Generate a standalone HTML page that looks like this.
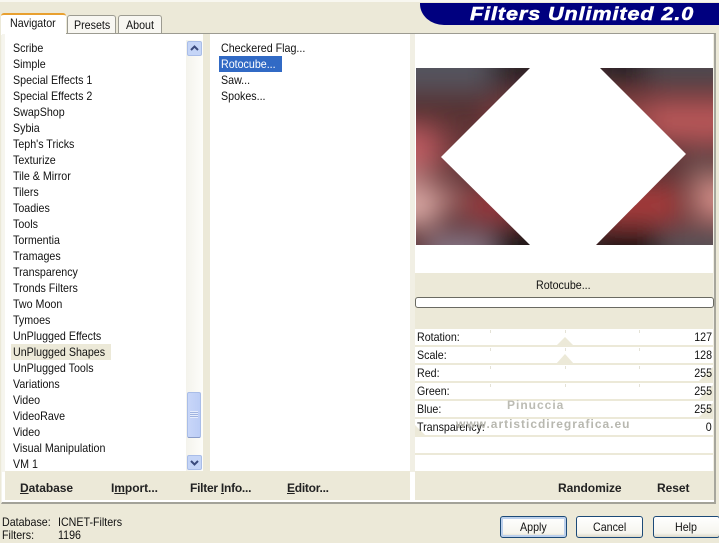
<!DOCTYPE html>
<html>
<head>
<meta charset="utf-8">
<style>
html,body{margin:0;padding:0;}
body{width:719px;height:541px;overflow:hidden;position:relative;background:#ece9d8;font-family:"Liberation Sans",sans-serif;font-size:12px;color:#111;}
.a{position:absolute;white-space:nowrap;}
.t{position:absolute;white-space:nowrap;line-height:16px;height:16px;transform:scaleX(.89);transform-origin:0 0;}
.r{transform-origin:100% 0;}
.b{font-weight:bold;font-size:12px;color:#222;letter-spacing:-.05px;}
u{text-decoration:underline;}
.btn{position:absolute;top:516px;height:22px;box-sizing:border-box;border:1px solid #1c4a78;border-radius:3px;background:linear-gradient(#fff,#f6f5ee 80%,#dcd8c8);}
.tab{position:absolute;top:15px;height:18px;box-sizing:border-box;background:#f8f7f2;border:1px solid #9c9b91;border-bottom:0;border-radius:3px 3px 0 0;}
.row{position:absolute;left:415px;width:298px;height:16px;background:#fff;}
.sep{position:absolute;left:415px;width:298px;height:2px;background:#ece9d8;}
.tick{position:absolute;width:1px;height:3px;background:#e4e2d6;}
</style>
</head>
<body>
<div class="a" style="left:0;top:0;width:719px;height:2px;background:#f8f7f0"></div>

<!-- header logo -->
<div class="a" style="left:420px;top:3px;width:299px;height:22px;background:#00007f;border-bottom-left-radius:24px 21px"></div>
<div class="a" style="left:470px;top:4px;font:italic bold 18px 'Liberation Sans',sans-serif;color:#fff;letter-spacing:.75px;line-height:21px;transform:scaleX(1.2);transform-origin:0 0;-webkit-text-stroke:.5px #fff">Filters Unlimited 2.0</div>

<!-- main panel -->
<div class="a" style="left:1px;top:33px;width:715px;height:471px;box-sizing:border-box;background:#fff;border-top:1px solid #9c9b91;border-right:2px solid #a7a69c;border-bottom:2px solid #a3a298;border-left:1px solid #f4f3ea"></div>

<!-- tabs -->
<div class="tab" style="left:67px;width:49px"></div>
<div class="tab" style="left:118px;width:44px"></div>
<div class="a" style="left:1px;top:13px;width:65px;height:22px;box-sizing:border-box;background:#fff;border-top:2px solid #e8a030;border-radius:3px 3px 0 0"></div>
<div class="t" style="left:10px;top:15px">Navigator</div>
<div class="t" style="left:74px;top:17px">Presets</div>
<div class="t" style="left:126px;top:17px">About</div>

<!-- column separators -->
<div class="a" style="left:2px;top:34px;width:3px;height:438px;background:#f6f5ee"></div>
<div class="a" style="left:203px;top:34px;width:7px;height:438px;background:#ece9d8"></div>
<div class="a" style="left:410px;top:34px;width:5px;height:438px;background:#f1efe4"></div>
<div class="a" style="left:713px;top:34px;width:1px;height:438px;background:#f1efe4"></div>

<!-- scrollbar -->
<div class="a" style="left:186px;top:40px;width:17px;height:431px;background:linear-gradient(90deg,#f4f3ec,#fdfdfa)"></div>
<div class="a" style="left:187px;top:41px;width:15px;height:15px;box-sizing:border-box;background:#c5d5f7;border:1px solid #a9bde8;border-radius:2px"></div>
<svg class="a" style="left:187px;top:41px" width="15" height="15"><path d="M4 9 L7.5 5.5 L11 9" fill="none" stroke="#3a4a7c" stroke-width="2"/></svg>
<div class="a" style="left:187px;top:392px;width:14px;height:46px;box-sizing:border-box;background:linear-gradient(90deg,#c8d6f8,#bccdf6);border:1px solid #a9bde8;border-bottom:1px solid #8a9cc8;border-radius:2px"></div>
<div class="a" style="left:190px;top:411px;width:8px;height:7px;background:repeating-linear-gradient(#e6edfc 0,#e6edfc 1px,#9fb3e0 1px,#9fb3e0 2px)"></div>
<div class="a" style="left:187px;top:455px;width:15px;height:15px;box-sizing:border-box;background:#c5d5f7;border:1px solid #a9bde8;border-radius:2px"></div>
<svg class="a" style="left:187px;top:455px" width="15" height="15"><path d="M4 6 L7.5 9.5 L11 6" fill="none" stroke="#3a4a7c" stroke-width="2"/></svg>

<!-- left list -->
<div class="a" style="left:11px;top:344px;width:100px;height:16px;background:#ece9d8"></div>
<div class="t" style="left:13px;top:40px">Scribe</div>
<div class="t" style="left:13px;top:56px">Simple</div>
<div class="t" style="left:13px;top:72px">Special Effects 1</div>
<div class="t" style="left:13px;top:88px">Special Effects 2</div>
<div class="t" style="left:13px;top:104px">SwapShop</div>
<div class="t" style="left:13px;top:120px">Sybia</div>
<div class="t" style="left:13px;top:136px">Teph's Tricks</div>
<div class="t" style="left:13px;top:152px">Texturize</div>
<div class="t" style="left:13px;top:168px">Tile &amp; Mirror</div>
<div class="t" style="left:13px;top:184px">Tilers</div>
<div class="t" style="left:13px;top:200px">Toadies</div>
<div class="t" style="left:13px;top:216px">Tools</div>
<div class="t" style="left:13px;top:232px">Tormentia</div>
<div class="t" style="left:13px;top:248px">Tramages</div>
<div class="t" style="left:13px;top:264px">Transparency</div>
<div class="t" style="left:13px;top:280px">Tronds Filters</div>
<div class="t" style="left:13px;top:296px">Two Moon</div>
<div class="t" style="left:13px;top:312px">Tymoes</div>
<div class="t" style="left:13px;top:328px">UnPlugged Effects</div>
<div class="t" style="left:13px;top:344px">UnPlugged Shapes</div>
<div class="t" style="left:13px;top:360px">UnPlugged Tools</div>
<div class="t" style="left:13px;top:376px">Variations</div>
<div class="t" style="left:13px;top:392px">Video</div>
<div class="t" style="left:13px;top:408px">VideoRave</div>
<div class="t" style="left:13px;top:424px">Video</div>
<div class="t" style="left:13px;top:440px">Visual Manipulation</div>
<div class="t" style="left:13px;top:456px">VM 1</div>

<!-- middle list -->
<div class="a" style="left:219px;top:56px;width:63px;height:16px;background:#316ac5"></div>
<div class="t" style="left:221px;top:40px">Checkered Flag...</div>
<div class="t" style="left:221px;top:56px;color:#fff">Rotocube...</div>
<div class="t" style="left:221px;top:72px">Saw...</div>
<div class="t" style="left:221px;top:88px">Spokes...</div>

<!-- preview -->
<svg class="a" style="left:416px;top:68px" width="297" height="177" viewBox="0 0 297 177">
<defs>
<filter id="bl" x="-20%" y="-20%" width="140%" height="140%"><feGaussianBlur stdDeviation="13"/></filter>
<clipPath id="cp"><rect width="297" height="177"/></clipPath>
</defs>
<g clip-path="url(#cp)">
<rect width="297" height="177" fill="#5a3335"/>
<g filter="url(#bl)">
<rect x="-30" y="-30" width="110" height="52" fill="#55555f"/>
<rect x="75" y="-30" width="60" height="45" fill="#2a2327"/>
<rect x="-30" y="25" width="130" height="28" fill="#553032"/>
<rect x="70" y="38" width="50" height="28" fill="#85383c"/>
<rect x="-30" y="60" width="50" height="38" fill="#c05c62"/>
<rect x="18" y="62" width="30" height="40" fill="#7a3d40"/>
<rect x="-30" y="100" width="45" height="20" fill="#bb7f7f"/>
<rect x="-30" y="122" width="50" height="36" fill="#dcaaa6"/>
<rect x="20" y="115" width="25" height="30" fill="#a56c6c"/>
<rect x="50" y="125" width="50" height="25" fill="#a5383c"/>
<rect x="10" y="165" width="65" height="40" fill="#857686"/>
<rect x="78" y="160" width="60" height="40" fill="#1c1215"/>
<rect x="180" y="-30" width="55" height="42" fill="#272125"/>
<rect x="232" y="-30" width="90" height="48" fill="#4f4a50"/>
<rect x="180" y="35" width="60" height="22" fill="#a84c4c"/>
<rect x="232" y="32" width="90" height="42" fill="#b85658"/>
<rect x="268" y="80" width="50" height="20" fill="#5f4748"/>
<rect x="270" y="105" width="50" height="12" fill="#a87a74"/>
<rect x="278" y="118" width="50" height="32" fill="#d8908a"/>
<rect x="185" y="118" width="80" height="36" fill="#a83a3a"/>
<rect x="175" y="162" width="75" height="40" fill="#1e1619"/>
<rect x="245" y="160" width="90" height="45" fill="#5a5156"/>
</g>
<polygon points="114,0 184,0 270,86 180,177 114,177 25,89" fill="#fff"/>
</g>
</svg>

<!-- filter name bar -->
<div class="a" style="left:415px;top:273px;width:298px;height:56px;background:#ece9d8"></div>
<div class="t" style="left:536px;top:277px">Rotocube...</div>
<div class="a" style="left:415px;top:297px;width:299px;height:11px;box-sizing:border-box;background:#fff;border:1px solid #6a6a62;border-radius:3px"></div>

<!-- sliders -->
<div class="row" style="top:329px"></div>
<div class="row" style="top:347px"></div>
<div class="row" style="top:365px"></div>
<div class="row" style="top:383px"></div>
<div class="row" style="top:401px"></div>
<div class="row" style="top:419px"></div>
<div class="row" style="top:437px"></div>
<div class="row" style="top:455px"></div>
<div class="sep" style="top:345px"></div>
<div class="sep" style="top:363px"></div>
<div class="sep" style="top:381px"></div>
<div class="sep" style="top:399px"></div>
<div class="sep" style="top:417px"></div>
<div class="sep" style="top:435px"></div>
<div class="sep" style="top:453px"></div>
<div class="tick" style="left:490px;top:330px"></div><div class="tick" style="left:565px;top:330px"></div><div class="tick" style="left:639px;top:330px"></div>
<div class="tick" style="left:490px;top:348px"></div><div class="tick" style="left:565px;top:348px"></div><div class="tick" style="left:639px;top:348px"></div>
<div class="tick" style="left:490px;top:366px"></div><div class="tick" style="left:565px;top:366px"></div><div class="tick" style="left:639px;top:366px"></div>
<div class="tick" style="left:490px;top:384px"></div><div class="tick" style="left:565px;top:384px"></div><div class="tick" style="left:639px;top:384px"></div>
<svg class="a" style="left:415px;top:329px" width="298" height="110">
<polygon points="141,17 150,8 159,17" fill="#ece9d8"/>
<polygon points="141,35 150,25 159,35" fill="#ece9d8"/>
<polygon points="283,53 298,38 298,53" fill="#ece9d8"/>
<polygon points="283,71 298,56 298,71" fill="#ece9d8"/>
<polygon points="283,89 298,74 298,89" fill="#ece9d8"/>
<polygon points="0,107 0,96 11,107" fill="#ece9d8"/>
</svg>
<div class="t" style="left:417px;top:329px">Rotation:</div><div class="t r" style="right:7px;top:329px">127</div>
<div class="t" style="left:417px;top:347px">Scale:</div><div class="t r" style="right:7px;top:347px">128</div>
<div class="t" style="left:417px;top:365px">Red:</div><div class="t r" style="right:7px;top:365px">255</div>
<div class="t" style="left:417px;top:383px">Green:</div><div class="t r" style="right:7px;top:383px">255</div>
<div class="t" style="left:417px;top:401px">Blue:</div><div class="t r" style="right:7px;top:401px">255</div>
<div class="t" style="left:417px;top:419px">Transparency:</div><div class="t r" style="right:7px;top:419px">0</div>

<!-- watermark -->
<div class="a" style="left:507px;top:398px;font:bold 12px 'Liberation Sans',sans-serif;color:#bcbcb4;letter-spacing:1px;line-height:15px">Pinuccia</div>
<div class="a" style="left:456px;top:417px;font:bold 12px 'Liberation Sans',sans-serif;color:#b8b8b0;letter-spacing:.98px;line-height:15px">www.artisticdiregrafica.eu</div>

<!-- toolbars -->
<div class="a" style="left:5px;top:471px;width:405px;height:29px;background:#ece9d8"></div>
<div class="a" style="left:415px;top:471px;width:299px;height:29px;background:#ece9d8"></div>
<div class="a b" style="left:20px;top:480px;line-height:16px"><u>D</u>atabase</div>
<div class="a b" style="left:111px;top:480px;line-height:16px">I<u>m</u>port...</div>
<div class="a b" style="left:190px;top:480px;line-height:16px;letter-spacing:-.25px">Filter <u>I</u>nfo...</div>
<div class="a b" style="left:287px;top:480px;line-height:16px;letter-spacing:-.25px"><u>E</u>ditor...</div>
<div class="a b" style="left:558px;top:480px;line-height:16px">Randomize</div>
<div class="a b" style="left:657px;top:480px;line-height:16px">Reset</div>

<!-- status -->
<div class="t" style="left:2px;top:514px">Database:</div>
<div class="t" style="left:58px;top:514px">ICNET-Filters</div>
<div class="t" style="left:2px;top:527px">Filters:</div>
<div class="t" style="left:58px;top:527px">1196</div>

<!-- buttons -->
<div class="btn" style="left:500px;width:67px;box-shadow:inset 0 0 0 2px #bcd0ec"></div>
<div class="btn" style="left:576px;width:67px"></div>
<div class="btn" style="left:653px;width:67px"></div>
<div class="t" style="left:520px;top:519px">Apply</div>
<div class="t" style="left:593px;top:519px">Cancel</div>
<div class="t" style="left:675px;top:519px">Help</div>
</body>
</html>
